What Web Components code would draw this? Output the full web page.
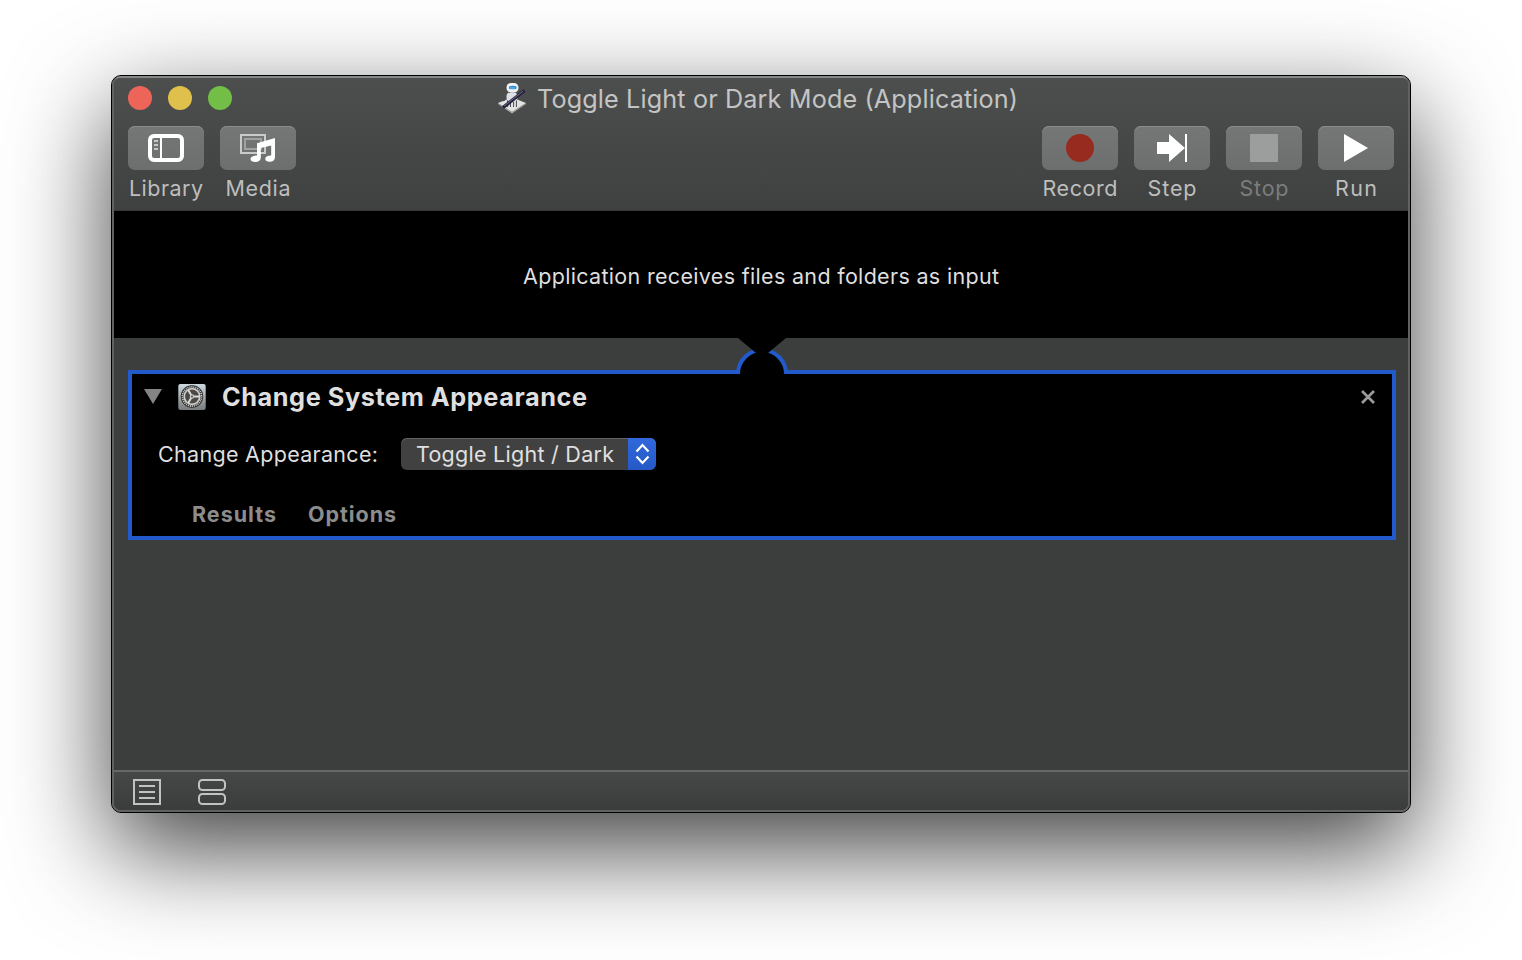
<!DOCTYPE html>
<html lang="en">
<head>
<meta charset="utf-8">
<title>Toggle Light or Dark Mode</title>
<style>
html,body{margin:0;width:1522px;height:960px;overflow:hidden;background:#fff}
body{font-family:Inter,"Liberation Sans",sans-serif}
</style>
</head>
<body>
<automator-window></automator-window>
<script>
const define=(name,html,init)=>customElements.define(name,class extends HTMLElement{
  connectedCallback(){
    if(this.shadowRoot)return;
    const t=document.createElement('template');
    t.innerHTML=typeof html==='function'?html(this):html;
    this.attachShadow({mode:'open'}).append(t.content.cloneNode(true));
    if(init)init(this);
  }
});

/* Text run tracked to fill the requested advance width. */
define('fit-text',`<style>:host{display:inline-block;white-space:nowrap}span{display:inline-block}</style><span><slot></slot></span>`,el=>{
  const w=+el.getAttribute('width'),s=el.shadowRoot.querySelector('span');
  const n=el.textContent.length;
  el.style.width=w+'px';
  s.style.letterSpacing=((w-s.getBoundingClientRect().width)/(n-1))+'px';
});

const icons={
library:`<svg width="36" height="28" viewBox="0 0 36 28"><rect x="2" y="2" width="32" height="24" rx="4" fill="none" stroke="#fff" stroke-width="4"/><path d="M13 3v22" stroke="#fff" stroke-width="2"/><path d="M6 7h4M6 11h4M6 15h4" stroke="#c4c5c4" stroke-width="2"/></svg>`,
media:`<svg width="36" height="30" viewBox="0 0 36 30"><rect x="1" y="2" width="24" height="18" fill="none" stroke="#c9caca" stroke-width="2"/><rect x="5" y="6" width="16" height="10" fill="none" stroke="#a0a2a1" stroke-width="2"/><path d="M17 10.2 35 5v19c0 3-2 4.800-5.200 4.800-2.800 0-4.600-1.300-4.600-3 0-2 2-3.400 6-3.400V12.500L20.800 15v9.500c0 2.900-2.100 4.500-5.400 4.500-2.900 0-4.900-1.100-4.900-3 0-2 2.300-3.400 6.500-3.400Z" fill="#fff"/></svg>`,
record:`<svg width="28" height="28"><circle cx="14" cy="14" r="14" fill="#972b20"/></svg>`,
step:`<svg width="32" height="28" viewBox="0 0 32 28"><path d="M1 8h12V0l16 14-16 14v-8H1Z" fill="#fff"/><path d="M30 0v28" stroke="#fff" stroke-width="2"/></svg>`,
stop:`<svg width="28" height="28"><path d="M0 0h28v28H0z" fill="#9c9e9d"/></svg>`,
run:`<svg width="26" height="28" viewBox="0 0 26 28"><path d="M1 0 25 14 1 28Z" fill="#fff"/></svg>`
};
define('tool-button',el=>`<style>
:host{display:flex;flex-direction:column;align-items:center;width:76px;font-size:21.5px;color:#bdbebd}
:host([disabled]){color:#7b7d7c}
button{all:unset;box-sizing:border-box;width:76px;height:44px;border-radius:7px;background:linear-gradient(#757776,#6d6f6e);box-shadow:inset 0 1px #8b8d8c;display:grid;place-items:center}
svg{display:block}
.label{height:36px;line-height:37px}
</style><button aria-label="${el.getAttribute('icon')}">${icons[el.getAttribute('icon')]}</button><div class="label"><slot></slot></div>`);

define('traffic-lights',`<style>:host{display:flex;gap:16px}i{width:24px;height:24px;border-radius:50%}</style><i style="background:#ed6459"></i><i style="background:#e0c04c"></i><i style="background:#72be47"></i>`);

define('robot-icon',`<style>:host{display:block;width:28px;height:32px}svg{display:block}</style>
<svg width="28" height="32" viewBox="0 0 28 32">
<path d="M0 21 14 15.500 28 21 14 30Z" fill="#e3e3e1"/><path d="M0 21 14 30 28 21v1L14 31.500 0 22Z" fill="#aaa9a8"/>
<path d="M8 13c-2 1-2.500 3-2 6M19 13c2 0 3 1 3 3" fill="none" stroke="#4b4b58" stroke-width="2"/>
<path d="M11 18v7M17 18v7" stroke="#555661" stroke-width="4"/><path d="M11 19v6M17 19v6" stroke="#d6d7de" stroke-width="2"/>
<rect x="8.500" y="10.500" width="11" height="9" rx="4" fill="#dedfe5"/>
<rect x="8.500" y="1" width="12" height="9.500" rx="4.500" fill="#f0f1f3"/>
<path d="M11 4.500q4-1.500 7.500 0v2.300q-4 1-7.500 0Z" fill="#2f86d2"/><path d="M12 6h5" stroke="#73c8f5"/>
<path d="M5 25.500 26.500 8.500" stroke="#23233b" stroke-width="3.400"/><path d="M6 24 25 9.200" stroke="#8282a2" stroke-width=".8"/></svg>`);

define('gear-icon',`<style>:host{display:block;width:28px;height:28px}svg{display:block}</style>
<svg width="28" height="28" viewBox="0 0 28 28"><defs><linearGradient id="g" x2="0" y2="1"><stop stop-color="#cbd8de"/><stop offset="1" stop-color="#777b7e"/></linearGradient></defs>
<rect x=".3" y="1" width="27.400" height="26" rx="2" fill="url(#g)"/>
<circle cx="14" cy="13.500" r="11.200" fill="#242424"/>
<circle cx="14" cy="13.500" r="9.600" fill="none" stroke="#c8c8c4" stroke-width="1.700" stroke-dasharray="1.200 .81"/>
<circle cx="14" cy="13.500" r="7.800" fill="#4b4a49" stroke="#d0d0cc" stroke-width="1.700"/>
<path d="M14 13.500h7.500M14 13.500 10.200 7M14 13.500 10.200 20" stroke="#dcdcd8" stroke-width="1.900"/>
<circle cx="14" cy="13.500" r="2.200" fill="#c6c6c2"/><circle cx="14" cy="13.500" r="1" fill="#555"/></svg>`);

define('pop-up',`<style>
:host{display:flex;box-sizing:border-box;width:255px;height:32px;border-radius:6px;overflow:hidden;background:#414141;box-shadow:inset 0 1px #626262;color:#e0e0e0}
.t{flex:1;padding-left:15px;line-height:33px}
.a{width:28px;background:linear-gradient(#3069dc,#2459c6);display:grid;place-items:center}
svg{display:block}</style><div class="t"><slot></slot></div><div class="a"><svg width="28" height="32"><path d="m8.500 13.500 6-6.500 6 6.500M8.500 18.500l6 6.500 6-6.500" fill="none" stroke="#fff" stroke-width="2.200"/></svg></div>`);

define('window-toolbar',`<style>
:host{display:block;box-sizing:border-box;height:133px;background:linear-gradient(#4d4f4e,#3f4140);border-bottom:1px solid #353736}
.title{display:grid;grid-template-columns:1fr auto 1fr;height:48px;padding:0 14px;box-sizing:border-box}
traffic-lights{padding-top:8px}
.name{display:flex;gap:11px;font-size:25.200px;line-height:42px;color:#c3c4c3;padding-right:6px}
robot-icon{margin-top:4px}
.tools{display:flex;gap:16px;padding:0 14px}
.space{flex:1}
</style>
<div class="title"><traffic-lights></traffic-lights><div class="name"><robot-icon></robot-icon><fit-text width="481">Toggle Light or Dark Mode (Application)</fit-text></div></div>
<div class="tools"><tool-button icon="library"><fit-text width="74">Library</fit-text></tool-button><tool-button icon="media"><fit-text width="65">Media</fit-text></tool-button><div class="space"></div>
<tool-button icon="record"><fit-text width="75">Record</fit-text></tool-button><tool-button icon="step"><fit-text width="49">Step</fit-text></tool-button><tool-button icon="stop" disabled><fit-text width="49">Stop</fit-text></tool-button><tool-button icon="run"><fit-text width="42">Run</fit-text></tool-button></div>`);

define('input-banner',`<style>:host{display:grid;place-items:center;height:127px;background:#000;color:#dfdfdf;font-size:21.500px;line-height:28px}fit-text{margin-top:2px}</style><fit-text width="476">Application receives files and folders as input</fit-text>`);

define('action-card',`<style>
:host{display:block;position:relative;box-sizing:border-box;height:170px;border:4px solid #235acb;background:#000;color:#dfdfdf;font-size:21.500px}
.notch{position:absolute;left:602px;top:-36px;display:block}
.head{display:flex;align-items:center;height:45px;padding:0 16px 0 12px}
.tri{width:18px;height:15px;margin-right:16px}
.head gear-icon{margin-right:16px}
h1{margin:0;flex:1;font-size:25.300px;line-height:45px;font-weight:700}
svg{display:block}
.row{display:flex;align-items:center;height:32px;margin:19px 0 0 26px;gap:23px}
.links{display:flex;gap:32px;margin:27px 0 0 60px;line-height:34px;color:#8c8c8c;font-weight:700}
</style>
<svg class="notch" width="56" height="42" viewBox="0 0 56 42"><path d="M4 38v-2C4 22 14.700 12 28 12s24 10 24 24v2Z" fill="#000"/><path d="M4 36a24 24 0 0 1 48 0" fill="none" stroke="#235acb" stroke-width="4"/><path d="M4 0H52L28 20ZM6 36h44v6H6Z" fill="#000"/></svg>
<div class="head"><svg class="tri" viewBox="0 0 18 15"><path d="M0 0h18L9 15Z" fill="#848484"/></svg><gear-icon></gear-icon><h1><fit-text width="365">Change System Appearance</fit-text></h1><svg width="16" height="16"><path d="m2 2 12 12M14 2 2 14" stroke="#9b9b9b" stroke-width="2.700"/></svg></div>
<div class="row"><fit-text width="220">Change Appearance:</fit-text><pop-up><fit-text width="198">Toggle Light / Dark</fit-text></pop-up></div>
<div class="links"><fit-text width="84">Results</fit-text><fit-text width="88">Options</fit-text></div>`);

define('status-bar',`<style>:host{display:flex;align-items:center;gap:36px;box-sizing:border-box;height:40px;padding:2px 18px 0;border-top:2px solid #666867;background:linear-gradient(#464847,#3b3d3c)}svg{display:block}</style>
<svg width="30" height="28"><path d="M2 2h26v24H2Z" fill="none" stroke="#c1c2c1" stroke-width="2"/><path d="M7 8h16M7 14h16M7 20h16" stroke="#c1c2c1" stroke-width="2"/></svg>
<svg width="28" height="28"><rect x="1" y="2" width="26" height="10" rx="3.500" fill="none" stroke="#c1c2c1" stroke-width="2"/><rect x="1" y="16" width="26" height="10" rx="3.500" fill="none" stroke="#c1c2c1" stroke-width="2"/></svg>`);

define('automator-window',`<style>
:host{display:block;box-sizing:border-box;width:1522px;height:960px;padding:75px 111px}
.frame{box-sizing:border-box;width:1300px;height:738px;border:1px solid #000;border-radius:10px;background:#5f6160;box-shadow:0 36px 100px rgba(0,0,0,.75)}
.edge{box-sizing:border-box;height:736px;padding:2px;border-radius:9px;background:linear-gradient(#868887 0 2px,#606261 3px)}
.body{height:732px;border-radius:7px;overflow:hidden;display:flex;flex-direction:column;background:#3c3e3d}
.canvas{flex:1;padding:32px 12px 0 14px}
</style><div class="frame"><div class="edge"><div class="body"><window-toolbar></window-toolbar><input-banner></input-banner><div class="canvas"><action-card></action-card></div><status-bar></status-bar></div></div></div>`);
</script>
</body>
</html>
